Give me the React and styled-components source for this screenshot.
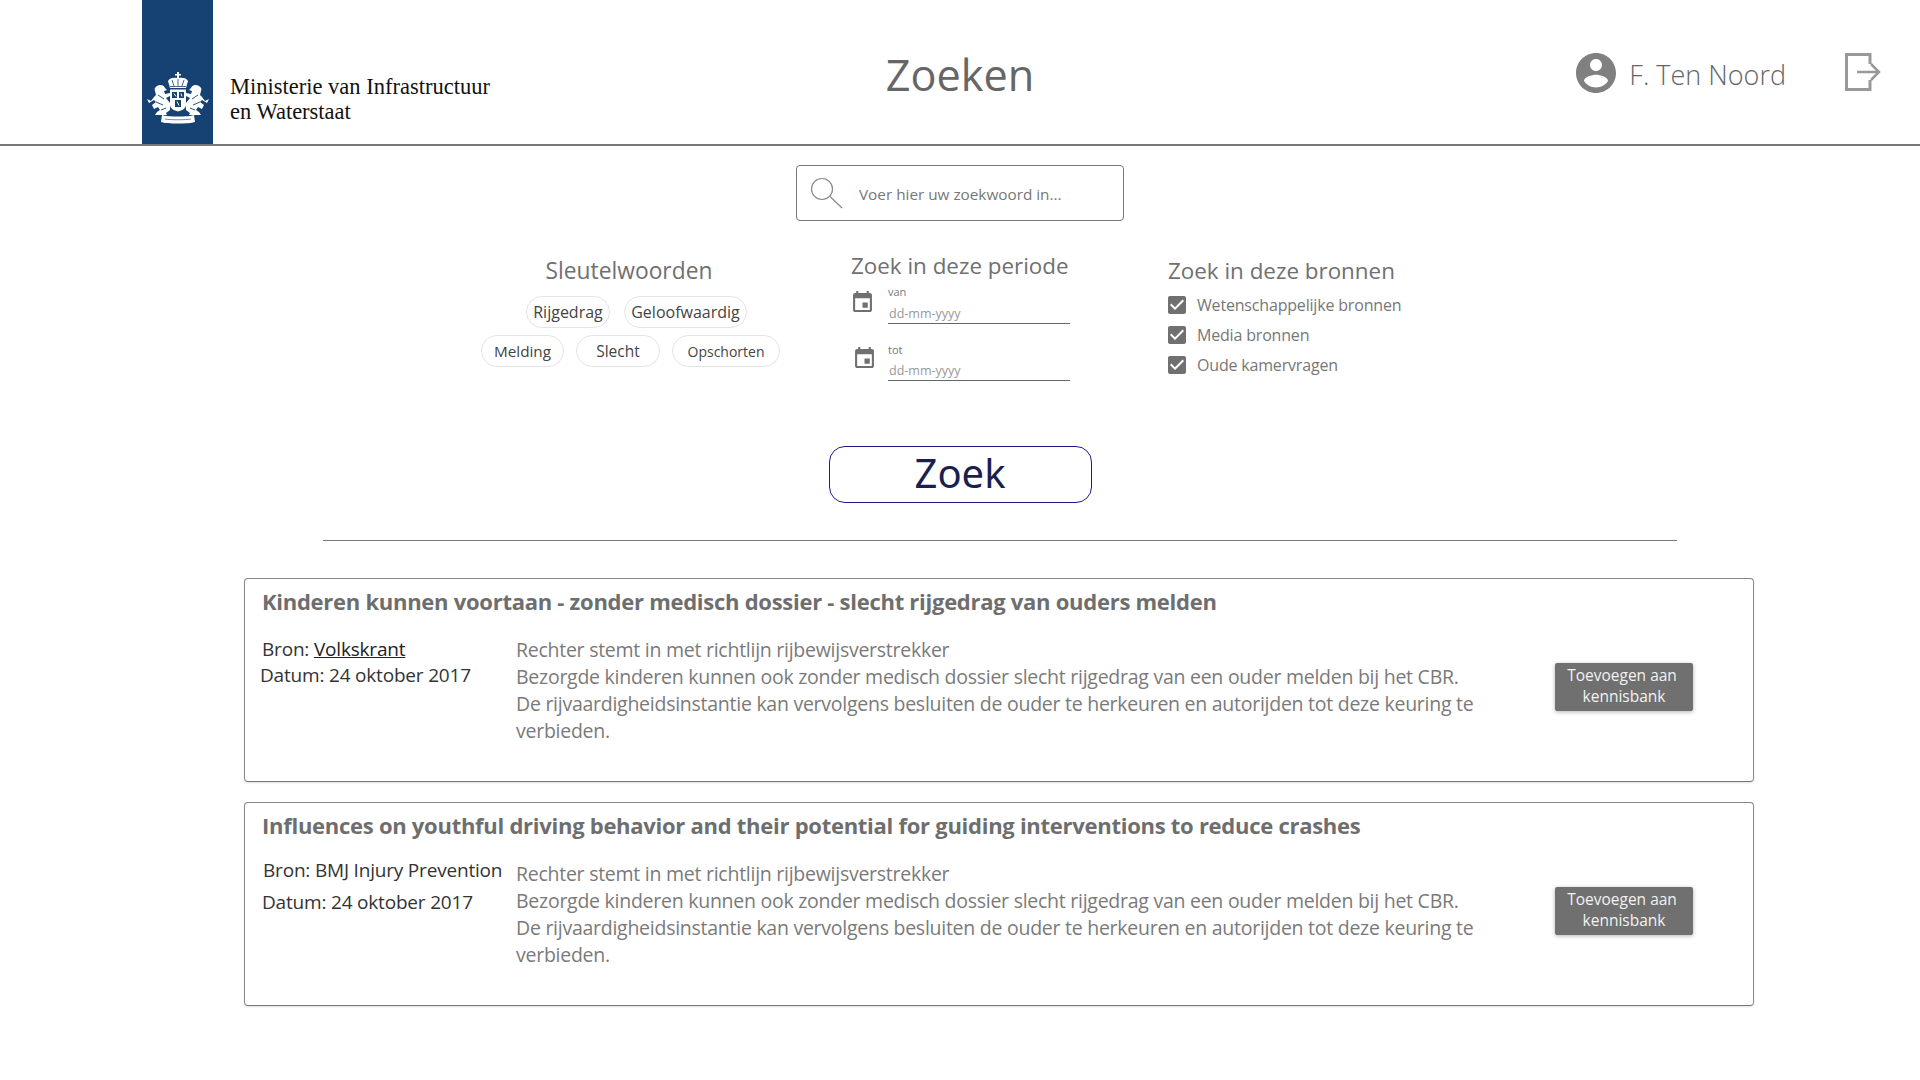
import React from 'react';
import styled, { createGlobalStyle } from 'styled-components';

const GlobalStyle = createGlobalStyle`
  html, body {
    margin: 0;
    background: #fff;
    font-family: "Open Sans", "Noto Sans", sans-serif;
  }
  * { box-sizing: border-box; }
`;

const Page = styled.div`
  width: 1920px;
  height: 1080px;
  overflow: hidden;
`;

const Header = styled.header`
  height: 146px;
  border-bottom: 2px solid #777;
  padding: 0 39px;
  display: grid;
  grid-template-columns: 1fr auto 1fr;
  align-items: stretch;
`;

const Logo = styled.div`
  display: flex;
  align-items: stretch;
  margin-left: 103px;
`;

const LogoBar = styled.div`
  width: 71px;
  background: #154273;
  display: flex;
  justify-content: center;
  padding-top: 72px;
`;

const LogoText = styled.div`
  margin-left: 17px;
  padding-top: 74px;
  font-family: "Liberation Serif", serif;
  font-size: 22.5px;
  line-height: 25px;
  color: #111;
  white-space: nowrap;
`;

const PageTitle = styled.h1`
  margin: 0;
  padding-top: 45px;
  font-size: 43.200px;
  line-height: 60px;
  font-weight: 400;
  color: #666;
`;

const UserArea = styled.div`
  display: flex;
  justify-content: flex-end;
  align-items: flex-start;
  padding-top: 53px;
`;

const UserName = styled.span`
  margin-left: 13px;
  margin-right: 59px;
  font-size: 27px;
  line-height: 44px;
  font-weight: 300;
  color: #666;
`;

const SearchBox = styled.div`
  width: 328px;
  height: 56px;
  margin: 19px auto 0;
  border: 1px solid #777;
  border-radius: 4px;
  display: flex;
  align-items: center;
  padding-left: 13px;
`;

const SearchText = styled.span`
  margin: 2px 0 0 15px;
  font-size: 15.300px;
  color: #777;
`;

const Filters = styled.section`
  width: 960px;
  margin: 0 auto;
  display: grid;
  grid-template-columns: 371px 317px 1fr;
  height: 225px;
`;

const FilterColumn = styled.div`
  padding-top: ${(p) => p.$top}px;
`;

const FilterHeading = styled.h2`
  margin: 0;
  font-size: ${(p) => p.$size || 22.4}px;
  line-height: 32px;
  font-weight: 400;
  color: #707070;
  white-space: nowrap;
`;

const KeywordColumn = styled(FilterColumn)`
  width: 298px;
  text-align: center;
`;

const ChipRow = styled.div`
  display: flex;
  gap: ${(p) => p.$gap}px;
  margin-top: ${(p) => p.$top}px;
  padding-left: ${(p) => p.$left}px;
`;

const Chip = styled.span`
  flex: none;
  height: 32px;
  width: ${(p) => p.$width}px;
  border: 1px solid #e4e4e4;
  border-radius: 16px;
  display: flex;
  align-items: center;
  justify-content: center;
  font-size: ${(p) => p.$size || 16}px;
  color: #444;
  white-space: nowrap;
`;

const DateRow = styled.div`
  display: grid;
  grid-template-columns: 37px 182px;
  margin-top: ${(p) => p.$top}px;
`;

const DateIcon = styled.svg`
  width: 19px;
  height: 21px;
  margin: 2px 0 0 ${(p) => p.$left}px;
  fill: #707070;
`;

const DateLabel = styled.div`
  margin-top: ${(p) => p.$top}px;
  font-size: 11px;
  line-height: 14px;
  color: #777;
`;

const DateInput = styled.div`
  margin-top: ${(p) => p.$top}px;
  height: 18px;
  border-bottom: 1px solid #666;
  padding-left: 1px;
  font-size: 12.500px;
  line-height: 16px;
  color: #999;
`;

const CheckList = styled.div`
  margin-top: 3px;
`;

const CheckRow = styled.div`
  display: flex;
  align-items: center;
  height: 30px;
  font-size: 16px;
  letter-spacing: -0.18px;
  color: #777;
`;

const CheckIcon = styled.svg`
  width: 18px;
  height: 18px;
  margin-right: 11px;
  fill: #707070;
`;

const SearchButton = styled.button`
  display: block;
  width: 263px;
  height: 57px;
  margin: 0 auto;
  padding: 0 0 4px;
  border: 1px solid #1b1b8c;
  border-radius: 16px;
  background: #fff;
  font-family: "Noto Sans", sans-serif;
  font-size: 40px;
  line-height: 50px;
  color: #1b1f4f;
`;

const Divider = styled.hr`
  width: 1354px;
  margin: 37px 0 0 323px;
  border: 0;
  border-top: 1px solid #777;
`;

const CardList = styled.div`
  width: 1510px;
  margin: 37px 0 0 244px;
  display: flex;
  flex-direction: column;
  gap: 20px;
`;

const Card = styled.article`
  height: 204px;
  border: 1px solid #888;
  border-bottom-color: #777;
  border-radius: 4px;
  padding: 6px 0 0 17px;
  box-shadow: 0 1px 2px rgba(0, 0, 0, 0.12);
`;

const CardTitle = styled.h3`
  margin: 0;
  font-size: 22px;
  letter-spacing: -0.27px;
  line-height: 32px;
  font-weight: 700;
  color: #6e6e6e;
  white-space: nowrap;
`;

const CardBody = styled.div`
  display: grid;
  grid-template-columns: 254px 1039px 138px;
  margin-top: 19px;
`;

const Meta = styled.div`
  font-size: 19px;
  letter-spacing: -0.19px;
  color: #333;
  white-space: nowrap;
`;

const MetaLine = styled.div`
  line-height: 26px;
  margin-left: ${(p) => p.$left || 0}px;
  margin-top: ${(p) => p.$top || 0}px;
`;

const SourceLink = styled.a`
  color: #222;
  text-decoration: underline;
`;

const Summary = styled.p`
  margin: 0;
  font-size: 19.500px;
  letter-spacing: -0.26px;
  line-height: 27px;
  color: #7a7a7a;
  white-space: nowrap;
`;

const AddButton = styled.button`
  width: 138px;
  height: 48px;
  margin-top: 27px;
  padding: 0 0 2px;
  border: 0;
  border-radius: 2px;
  background: #707070;
  box-shadow: 0 1px 4px rgba(0, 0, 0, 0.3);
  font-family: inherit;
  font-size: 15.500px;
  line-height: 21px;
  color: #f2f2f2;
`;

const AddFirstLine = styled.span`
  margin-left: -4px;
`;

function Crest() {
  const lion = 'M11 14C14 12 18 13 19 16L21 18L18 19L19 22L24 21L24 24L20 26L24 31L24 38L20 41L21 43L9 43L11 40L14 38L12 35L8 37L6 33L10 30L8 28L3 31L1 27L5 29L8 25L10 23L9 19C8 17 9 15 11 14Z';
  const cuts = 'M12 23L18 27M10 30L17 33M15 38L20 36';
  return (
    <svg width="64" height="52" viewBox="0 0 64 52" fill="#fff">
      <path d={lion} />
      <path d={cuts} fill="none" stroke="#154273" strokeWidth="0.9" />
      <g transform="matrix(-1 0 0 1 64 0)">
        <path d={lion} />
        <path d={cuts} fill="none" stroke="#154273" strokeWidth="0.9" />
      </g>
      <path d="M31 0h2v2h2v1.500h-2V6c3-1 8 0 9 3l-2 7H24l-2-7c1-3 6-4 9-3V3.500h-2V2h2z" />
      <path d="M26 8l2 6M32 7v7M38 8l-2 6M24 14.500h16" fill="none" stroke="#154273" strokeWidth="0.8" />
      <path d="M24 17.500h16v15c0 4-4 6-8 7-4-1-8-3-8-7z" />
      <path d="M26 20h5v6h-5zM33 20h5v6h-5zM29 28h6v7h-6z" fill="#154273" />
      <path d="M28 21.500l2 3M35 21.500l1 3M31 29.500l2 4" fill="none" stroke="#fff" strokeWidth="1" />
      <path d="M16 43c5 2 27 2 32 0l1 7c-6 2-28 2-34 0z" />
      <path d="M19 47c5 1 21 1 26 0" fill="none" stroke="#154273" strokeWidth="0.6" />
    </svg>
  );
}

const ARTICLE_LINES = [
  'Rechter stemt in met richtlijn rijbewijsverstrekker',
  'Bezorgde kinderen kunnen ook zonder medisch dossier slecht rijgedrag van een ouder melden bij het CBR.',
  'De rijvaardigheidsinstantie kan vervolgens besluiten de ouder te herkeuren en autorijden tot deze keuring te',
  'verbieden.',
];

function ResultCard({ title, children }) {
  return (
    <Card>
      <CardTitle>{title}</CardTitle>
      <CardBody>
        <Meta>{children}</Meta>
        <Summary>
          {ARTICLE_LINES.map((line) => (
            <React.Fragment key={line}>{line}<br /></React.Fragment>
          ))}
        </Summary>
        <AddButton><AddFirstLine>Toevoegen aan</AddFirstLine><br />kennisbank</AddButton>
      </CardBody>
    </Card>
  );
}

function DateField({ label, top, iconLeft, labelTop, inputTop }) {
  return (
    <DateRow $top={top}>
      <DateIcon viewBox="3 1 18 20" $left={iconLeft}>
        <path d="M17 12h-5v5h5v-5zM16 1v2H8V1H6v2H5c-1.110 0-1.990.9-1.990 2L3 19c0 1.100.89 2 2 2h14c1.100 0 2-.9 2-2V5c0-1.100-.9-2-2-2h-1V1h-2zm3 18H5V8h14v11z" />
      </DateIcon>
      <div>
        <DateLabel $top={labelTop}>{label}</DateLabel>
        <DateInput $top={inputTop}>dd-mm-yyyy</DateInput>
      </div>
    </DateRow>
  );
}

function SourceCheck({ children }) {
  return (
    <CheckRow>
      <CheckIcon viewBox="3 3 18 18">
        <path d="M19 3H5c-1.110 0-2 .9-2 2v14c0 1.100.89 2 2 2h14c1.110 0 2-.9 2-2V5c0-1.100-.89-2-2-2zm-9 14l-5-5 1.410-1.410L10 14.170l7.590-7.590L19 8l-9 9z" />
      </CheckIcon>
      {children}
    </CheckRow>
  );
}

export default function App() {
  return (
    <Page>
      <GlobalStyle />
      <Header>
        <Logo>
          <LogoBar><Crest /></LogoBar>
          <LogoText>Ministerie van Infrastructuur<br />en Waterstaat</LogoText>
        </Logo>
        <PageTitle>Zoeken</PageTitle>
        <UserArea>
          <svg width="40" height="40" viewBox="2 2 20 20" fill="#808080">
            <path d="M12 2C6.480 2 2 6.480 2 12s4.480 10 10 10 10-4.480 10-10S17.520 2 12 2zm0 3c1.660 0 3 1.340 3 3s-1.340 3-3 3-3-1.340-3-3 1.340-3 3-3zm0 14.200c-2.500 0-4.710-1.280-6-3.220.03-1.990 4-3.080 6-3.080 1.990 0 5.970 1.090 6 3.080-1.290 1.940-3.500 3.220-6 3.220z" />
          </svg>
          <UserName>F. Ten Noord</UserName>
          <svg width="36" height="38" viewBox="0 0 36 38" fill="none" stroke="#999" strokeWidth="3">
            <path d="M25 11V1.500H1.500v35H25V27" />
            <path d="M12 19h22M26 11l8 8-8 8" strokeWidth="2.500" />
          </svg>
        </UserArea>
      </Header>

      <SearchBox>
        <svg width="34" height="32" viewBox="0 0 34 32" fill="none" stroke="#888" strokeWidth="1.200">
          <circle cx="12" cy="12" r="10.500" />
          <path d="M20 19.500L32 31" />
        </svg>
        <SearchText>Voer hier uw zoekwoord in...</SearchText>
      </SearchBox>

      <Filters>
        <KeywordColumn $top={34}>
          <FilterHeading $size={22.8}>Sleutelwoorden</FilterHeading>
          <ChipRow $gap={14} $top={9} $left={46}>
            <Chip $width={84}>Rijgedrag</Chip>
            <Chip $width={123}>Geloofwaardig</Chip>
          </ChipRow>
          <ChipRow $gap={12} $top={7} $left={1}>
            <Chip $width={83} $size={15.3}>Melding</Chip>
            <Chip $width={84} $size={15.5}>Slecht</Chip>
            <Chip $width={108} $size={14}>Opschorten</Chip>
          </ChipRow>
        </KeywordColumn>
        <FilterColumn $top={29}>
          <FilterHeading>Zoek in deze periode</FilterHeading>
          <DateField label="van" top={7} iconLeft={2} labelTop={-4} inputTop={7} />
          <DateField label="tot" top={21} iconLeft={4} labelTop={-2} inputTop={6} />
        </FilterColumn>
        <FilterColumn $top={34}>
          <FilterHeading>Zoek in deze bronnen</FilterHeading>
          <CheckList>
            <SourceCheck>Wetenschappelijke bronnen</SourceCheck>
            <SourceCheck>Media bronnen</SourceCheck>
            <SourceCheck>Oude kamervragen</SourceCheck>
          </CheckList>
        </FilterColumn>
      </Filters>

      <SearchButton>Zoek</SearchButton>
      <Divider />

      <CardList>
        <ResultCard title="Kinderen kunnen voortaan - zonder medisch dossier - slecht rijgedrag van ouders melden">
          <MetaLine>Bron: <SourceLink>Volkskrant</SourceLink></MetaLine>
          <MetaLine $left={-2}>Datum: 24 oktober 2017</MetaLine>
        </ResultCard>
        <ResultCard title="Influences on youthful driving behavior and their potential for guiding interventions to reduce crashes">
          <MetaLine $left={1} $top={-3}>Bron: BMJ Injury Prevention</MetaLine>
          <MetaLine $top={6}>Datum: 24 oktober 2017</MetaLine>
        </ResultCard>
      </CardList>
    </Page>
  );
}
